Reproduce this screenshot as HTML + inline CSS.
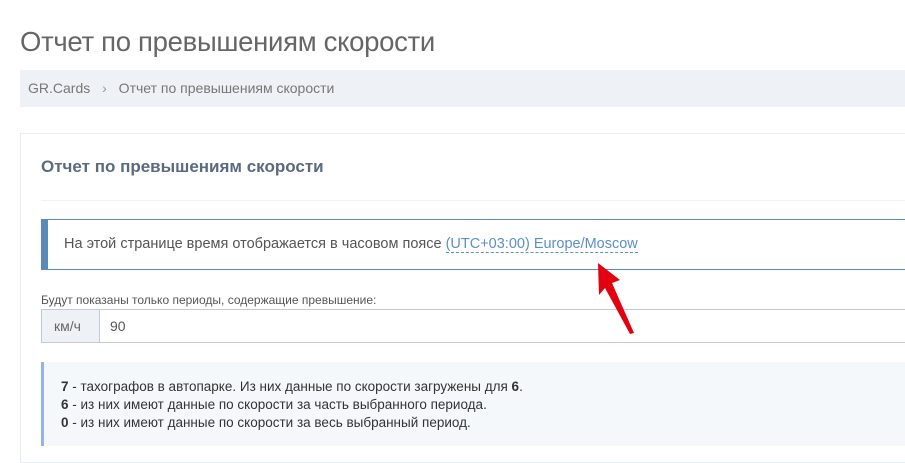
<!DOCTYPE html>
<html><head><meta charset="utf-8"><style>
body{margin:0;width:905px;height:451px;overflow:hidden;background:#fff;font-family:"Liberation Sans",sans-serif;position:relative}
.a{position:absolute;white-space:nowrap}
</style></head><body>
<div class="a" style="left:20px;top:26px;font-size:27.5px;color:#666;font-weight:300;letter-spacing:-0.3px">Отчет по превышениям скорости</div>
<div class="a" style="left:20px;top:70px;width:885px;height:37px;background:#eef1f5"></div>
<div class="a" style="left:28px;top:80px;font-size:14px;color:#777">GR.Cards <span style="margin:0 8px;color:#999">›</span> Отчет по превышениям скорости</div>
<div class="a" style="left:20px;top:133px;width:900px;height:330px;border:1px solid #e7ecf1;box-sizing:border-box"></div>
<div class="a" style="left:41px;top:157px;font-size:17px;font-weight:bold;color:#5a6a80">Отчет по превышениям скорости</div>
<div class="a" style="left:41px;top:200px;width:864px;height:1px;background:#eef1f5"></div>
<div class="a" style="left:41px;top:219px;width:870px;height:51px;border:1px solid #5a8ab8;border-left:7px solid #5a8ab8;box-sizing:border-box"></div>
<div class="a" style="left:64px;top:236px;font-size:14.5px;color:#555">На этой странице время отображается в часовом поясе <span style="color:#5b8fc9;border-bottom:1px dashed #5b8fc9">(UTC+03:00) Europe/Moscow</span></div>
<div class="a" style="left:41px;top:293px;font-size:12px;color:#555">Будут показаны только периоды, содержащие превышение:</div>
<div class="a" style="left:41px;top:309px;width:870px;height:34px;border:1px solid #c2cad8;box-sizing:border-box"></div>
<div class="a" style="left:42px;top:310px;width:57px;height:32px;background:#eef1f5;border-right:1px solid #c2cad8"></div>
<div class="a" style="left:54px;top:318px;font-size:14px;color:#666">км/ч</div>
<div class="a" style="left:110px;top:318px;font-size:14px;color:#555">90</div>
<div class="a" style="left:41px;top:362px;width:870px;height:84px;background:#f5f8fb;border-left:3px solid #8fb6e6;box-sizing:border-box"></div>
<div class="a" style="left:61px;top:378px;font-size:13.5px;color:#333;line-height:18px">
<b>7</b> - тахографов в автопарке. Из них данные по скорости загружены для <b>6</b>.<br>
<b>6</b> - из них имеют данные по скорости за часть выбранного периода.<br>
<b>0</b> - из них имеют данные по скорости за весь выбранный период.</div>
<svg class="a" style="left:585px;top:255px" width="60" height="85"><path d="M13 8 L35 25 L27 28 L49 78 L45 79 L20 33 L14 40 Z" fill="#e3000f"/></svg>
</body></html>
